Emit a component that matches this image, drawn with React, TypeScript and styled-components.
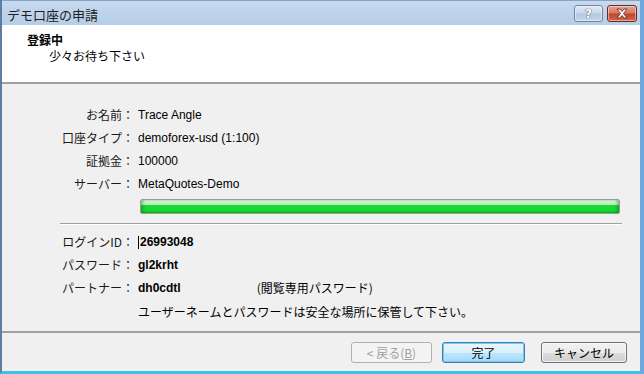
import React from "react";
import styled, { createGlobalStyle } from "styled-components";

const GlobalStyle = createGlobalStyle`
  html, body {
    margin: 0;
    padding: 0;
    background: #ffffff;
  }
  body {
    font-family: "Liberation Sans", "Noto Sans CJK JP", sans-serif;
    font-size: 12px;
    color: #000;
  }
`;

const Window = styled.div`
  width: 644px;
  height: 374px;
  box-sizing: border-box;
  display: flex;
  flex-direction: column;
  border-left: 2px solid #5d7da3;
  border-right: 4px solid #6fa8dc;
  border-bottom: 3px solid #3cc4e6;
  background: #f0f0f0;
  overflow: hidden;
`;

const TitleBar = styled.div`
  height: 25px;
  flex: 0 0 25px;
  display: flex;
  align-items: center;
  justify-content: space-between;
  padding: 0 3px 0 5px;
  background: linear-gradient(#c6d9ee, #b5cde8);
  border-top: 1px solid #8aa3c2;
  box-sizing: border-box;
`;

const Title = styled.span`
  font-family: "Noto Sans CJK JP", sans-serif;
  font-size: 13px;
  color: #1e1e1e;
  margin-top: 2px;
`;

const Controls = styled.div`
  display: flex;
  gap: 4px;
  align-items: center;
  margin-top: 1px;
`;

const CaptionButton = styled.div<{ $close?: boolean }>`
  width: ${({ $close }) => ($close ? "30px" : "29px")};
  height: 17px;
  box-sizing: border-box;
  border: 1px solid ${({ $close }) => ($close ? "#6b2a1e" : "#6f84a2")};
  border-radius: 3px;
  display: flex;
  align-items: center;
  justify-content: center;
  background: ${({ $close }) =>
    $close
      ? "linear-gradient(#e5a393 0%, #d47a63 45%, #c0442b 55%, #d2674c 100%)"
      : "linear-gradient(#e2ebf6 0%, #c9d8ea 45%, #b4c8e1 55%, #c6d7ec 100%)"};
  box-shadow: inset 0 0 0 1px rgba(255, 255, 255, 0.45);
`;

const HelpGlyph = styled.span`
  font-family: "DejaVu Sans", sans-serif;
  font-weight: bold;
  font-size: 12px;
  color: #fff;
  text-shadow: 0 0 1px #3a4a60, 0 0 1px #3a4a60;
`;

const Header = styled.div`
  height: 59px;
  flex: 0 0 59px;
  background: #ffffff;
  border-bottom: 2px solid #a0a0a0;
  box-sizing: border-box;
  padding: 7px 0 0 25px;
  font-family: "Noto Sans CJK JP", sans-serif;
`;

const HeaderTitle = styled.div`
  font-weight: bold;
  font-size: 12px;
  line-height: 15px;
`;

const HeaderSub = styled.div`
  font-size: 12px;
  line-height: 15px;
  padding-left: 22px;
  margin-top: 1px;
`;

const Body = styled.div`
  flex: 1;
  display: flex;
  flex-direction: column;
  padding-top: 23px;
`;

const FieldList = styled.div`
  display: grid;
  grid-template-columns: 136px 1fr;
  row-gap: 7px;
`;

const Label = styled.div`
  font-family: "Noto Sans CJK JP", sans-serif;
  font-size: 12px;
  line-height: 16px;
  text-align: right;
  padding-right: 4px;
  color: #1a1a1a;
`;

const Value = styled.div<{ $bold?: boolean }>`
  font-family: "Liberation Sans", "Noto Sans CJK JP", sans-serif;
  font-size: 12px;
  font-weight: ${({ $bold }) => ($bold ? "bold" : "normal")};
  line-height: 16px;
  display: flex;
  align-items: center;
`;

const Note = styled.span`
  font-family: "Noto Sans CJK JP", sans-serif;
  font-weight: normal;
  font-size: 12px;
  margin-left: 76px;
`;

const Caret = styled.span`
  display: inline-block;
  width: 1px;
  height: 13px;
  background: #000;
  margin-right: 1px;
`;

const ProgressTrack = styled.div`
  margin: 7px 20px 0 138px;
  height: 15px;
  box-sizing: border-box;
  border: 1px solid #9a9a9a;
  border-radius: 2px;
  background: linear-gradient(
    #d6f7d6 0%,
    #b8f0b8 35%,
    #1ed63a 40%,
    #10dc2c 80%,
    #0fb82a 100%
  );
  box-shadow: inset 3px 0 3px -1px rgba(0, 80, 0, 0.35), inset -3px 0 3px -1px rgba(0, 80, 0, 0.35);
`;

const Divider = styled.div`
  margin: 9px 18px 9px 58px;
  height: 0;
  border-top: 1px solid #a0a0a0;
  border-bottom: 1px solid #ffffff;
`;

const Footnote = styled.div`
  font-family: "Noto Sans CJK JP", sans-serif;
  font-size: 12px;
  line-height: 16px;
  padding-left: 136px;
  margin-top: 8px;
`;

const Footer = styled.div`
  margin-top: auto;
  border-top: 2px solid #a0a0a0;
  height: 40px;
  flex: 0 0 40px;
  box-sizing: border-box;
  display: flex;
  justify-content: flex-end;
  align-items: flex-start;
  padding: 9px 13px 0 0;
  gap: 10px;
`;

const Button = styled.button<{ $focused?: boolean; $width: number; $gap?: number }>`
  width: ${({ $width }) => `${$width}px`};
  height: 21px;
  box-sizing: border-box;
  margin-left: ${({ $gap }) => ($gap ? `${$gap}px` : "0")};
  border: 1px solid ${({ $focused }) => ($focused ? "#3c7fb1" : "#707070")};
  border-radius: 3px;
  background: ${({ $focused }) =>
    $focused
      ? "linear-gradient(#eaf6fd 0%, #d9f0fc 50%, #bee6fd 50%, #a7d9f5 100%)"
      : "linear-gradient(#f2f2f2 0%, #ebebeb 50%, #dddddd 50%, #cfcfcf 100%)"};
  box-shadow: inset 0 0 0 1px ${({ $focused }) => ($focused ? "#7cc6ee" : "rgba(255,255,255,0.7)")};
  font-family: "Noto Sans CJK JP", sans-serif;
  font-size: 12px;
  color: #000;
  padding: 0;
  display: flex;
  align-items: center;
  justify-content: center;

  &:disabled {
    background: #f4f4f4;
    border-color: #adb2b5;
    box-shadow: none;
    color: #a0a0a0;
  }
`;

const Underlined = styled.span`
  text-decoration: underline;
`;

const fields = [
  { label: "お名前：", value: "Trace Angle" },
  { label: "口座タイプ：", value: "demoforex-usd (1:100)" },
  { label: "証拠金：", value: "100000" },
  { label: "サーバー：", value: "MetaQuotes-Demo" },
];

const App: React.FC = () => {
  return (
    <>
      <GlobalStyle />
      <Window>
        <TitleBar>
          <Title>デモ口座の申請</Title>
          <Controls>
            <CaptionButton>
              <HelpGlyph>?</HelpGlyph>
            </CaptionButton>
            <CaptionButton $close>
              <svg width="14" height="11" viewBox="0 0 14 11">
                <path
                  d="M2 1 L5 1 L7 3.5 L9 1 L12 1 L8.5 5.5 L12 10 L9 10 L7 7.5 L5 10 L2 10 L5.5 5.5 Z"
                  fill="#ffffff"
                  stroke="#5a2014"
                  strokeWidth="0.8"
                  strokeLinejoin="round"
                />
              </svg>
            </CaptionButton>
          </Controls>
        </TitleBar>

        <Header>
          <HeaderTitle>登録中</HeaderTitle>
          <HeaderSub>少々お待ち下さい</HeaderSub>
        </Header>

        <Body>
          <FieldList>
            {fields.map((f) => (
              <React.Fragment key={f.label}>
                <Label>{f.label}</Label>
                <Value>{f.value}</Value>
              </React.Fragment>
            ))}
          </FieldList>

          <ProgressTrack />
          <Divider />

          <FieldList>
            <Label>ログインID：</Label>
            <Value $bold>
              <Caret />
              26993048
            </Value>
            <Label>パスワード：</Label>
            <Value $bold>gl2krht</Value>
            <Label>パートナー：</Label>
            <Value $bold>
              dh0cdtl
              <Note>(閲覧専用パスワード)</Note>
            </Value>
          </FieldList>
          <Footnote>ユーザーネームとパスワードは安全な場所に保管して下さい。</Footnote>

          <Footer>
            <Button disabled $width={81}>
              &lt; 戻る(<Underlined>B</Underlined>)
            </Button>
            <Button $focused $width={83}>完了</Button>
            <Button $width={86} $gap={6}>キャンセル</Button>
          </Footer>
        </Body>
      </Window>
    </>
  );
};

export default App;
